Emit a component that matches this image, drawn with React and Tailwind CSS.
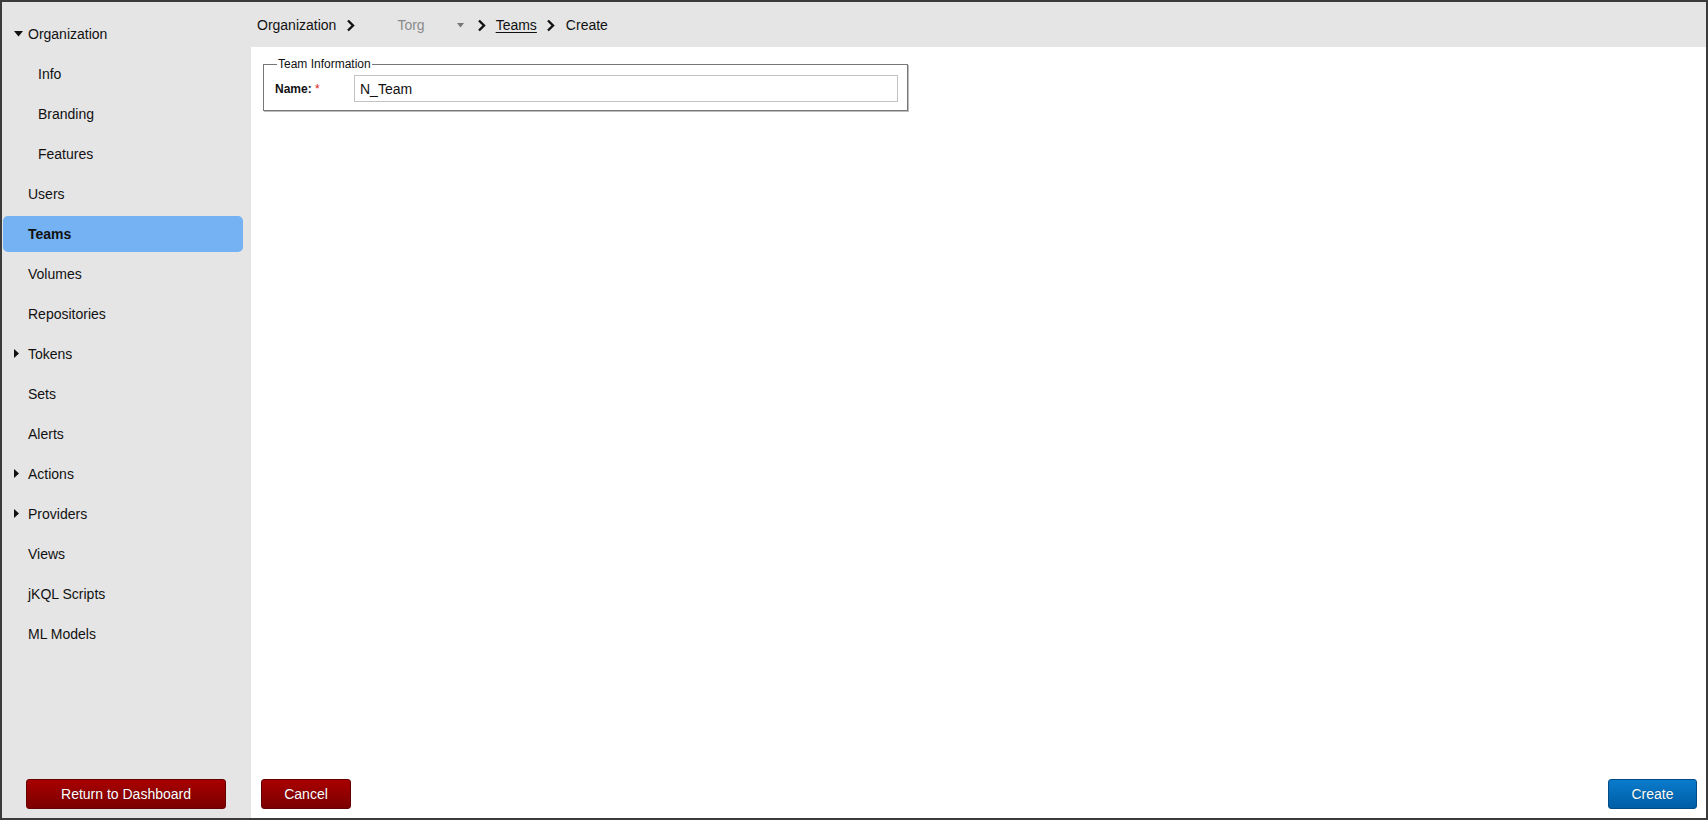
const NAV = [
  { label: 'Organization', caret: 'down' },
  { label: 'Info', sub: true },
  { label: 'Branding', sub: true },
  { label: 'Features', sub: true },
  { label: 'Users' },
  { label: 'Teams', active: true },
  { label: 'Volumes' },
  { label: 'Repositories' },
  { label: 'Tokens', caret: 'right' },
  { label: 'Sets' },
  { label: 'Alerts' },
  { label: 'Actions', caret: 'right' },
  { label: 'Providers', caret: 'right' },
  { label: 'Views' },
  { label: 'jKQL Scripts' },
  { label: 'ML Models' },
]

function Chevron() {
  return (
    <svg width="9" height="13" viewBox="0 0 9 13" className="shrink-0">
      <path d="M2 1.5 L7 6.5 L2 11.5" fill="none" stroke="#111" strokeWidth="2.4" />
    </svg>
  )
}

function Caret({ dir }) {
  if (dir === 'down') {
    return (
      <svg width="9" height="6" viewBox="0 0 9 6" className="absolute left-[12px] top-[17px]">
        <path d="M0 0 L9 0 L4.5 5.5 Z" fill="#111" />
      </svg>
    )
  }
  return (
    <svg width="5" height="9" viewBox="0 0 5 9" className="absolute left-[12px] top-[15px]">
      <path d="M0 0 L5 4.5 L0 9 Z" fill="#111" />
    </svg>
  )
}

function NavItem({ item }) {
  return (
    <div className="h-10 relative flex items-center">
      {item.active && <div className="absolute left-[1px] right-2 top-[2px] bottom-[2px] rounded-[5px] bg-[#74b2f3]" />}
      {item.caret && <Caret dir={item.caret} />}
      <span className={`relative text-[14px] text-[#111] ${item.sub ? 'pl-[36px]' : 'pl-[26px]'} ${item.active ? 'font-bold' : ''}`}>
        {item.label}
      </span>
    </div>
  )
}

function Btn({ color, className, children }) {
  const styles = color === 'red'
    ? 'bg-gradient-to-b from-[#a90000] to-[#7c0000] border-[#650000]'
    : 'bg-gradient-to-b from-[#0a7bcc] to-[#005ea6] border-[#004b86]'
  return (
    <button className={`h-[30px] rounded-[3px] border text-white text-[14px] [text-shadow:0_0_1px_rgba(0,0,0,0.4)] ${styles} ${className}`}>
      {children}
    </button>
  )
}

export default function App() {
  return (
    <div className="w-[1708px] h-[820px] border-2 border-[#3b3b3b] bg-white flex font-['Liberation_Sans',Arial,sans-serif] overflow-hidden">
      {/* Sidebar */}
      <aside className="w-[249px] shrink-0 bg-[#e5e5e5] flex flex-col">
        <nav className="pt-3 flex-1">
          {NAV.map(item => <NavItem key={item.label} item={item} />)}
        </nav>
        <div className="pb-[9px] pl-6">
          <Btn color="red" className="w-[200px]">Return to Dashboard</Btn>
        </div>
      </aside>

      {/* Main */}
      <main className="flex-1 flex flex-col">
        <header className="h-[45px] bg-[#e5e5e5] flex items-center pt-[2px] pl-[6px] text-[14px] text-[#111]">
          <span>Organization</span>
          <span className="ml-[10px]"><Chevron /></span>
          <span className="ml-[42px] text-[#8a8a8a]">Torg</span>
          <svg width="7" height="5" viewBox="0 0 7 5" className="ml-[32px]">
            <path d="M0 0 L7 0 L3.5 4.5 Z" fill="#777" />
          </svg>
          <span className="ml-[13px]"><Chevron /></span>
          <span className="ml-[10px] underline underline-offset-2">Teams</span>
          <span className="ml-[9px]"><Chevron /></span>
          <span className="ml-[11px]">Create</span>
        </header>

        <div className="flex-1 pt-[10px] pl-3">
          <fieldset className="w-[645px] border border-[#777] shadow-[1px_1px_0_#bdbdbd] pl-[11px] pr-[9px] pb-[8px] pt-[4px]">
            <legend className="ml-[2px] px-[1px] text-[12px] leading-[14px] text-[#111]">Team Information</legend>
            <div className="flex items-center">
              <label className="w-[79px] text-[12px] font-bold text-[#111]">
                Name: <span className="text-[#e02020] font-normal">*</span>
              </label>
              <input
                defaultValue="N_Team"
                className="flex-1 h-[27px] border border-[#c3c3c3] pl-[5px] text-[14px] text-[#111] outline-none"
              />
            </div>
          </fieldset>
        </div>

        <div className="flex justify-between items-end pl-[10px] pr-[9px] pb-[9px]">
          <Btn color="red" className="w-[90px]">Cancel</Btn>
          <Btn color="blue" className="w-[89px]">Create</Btn>
        </div>
      </main>
    </div>
  )
}
